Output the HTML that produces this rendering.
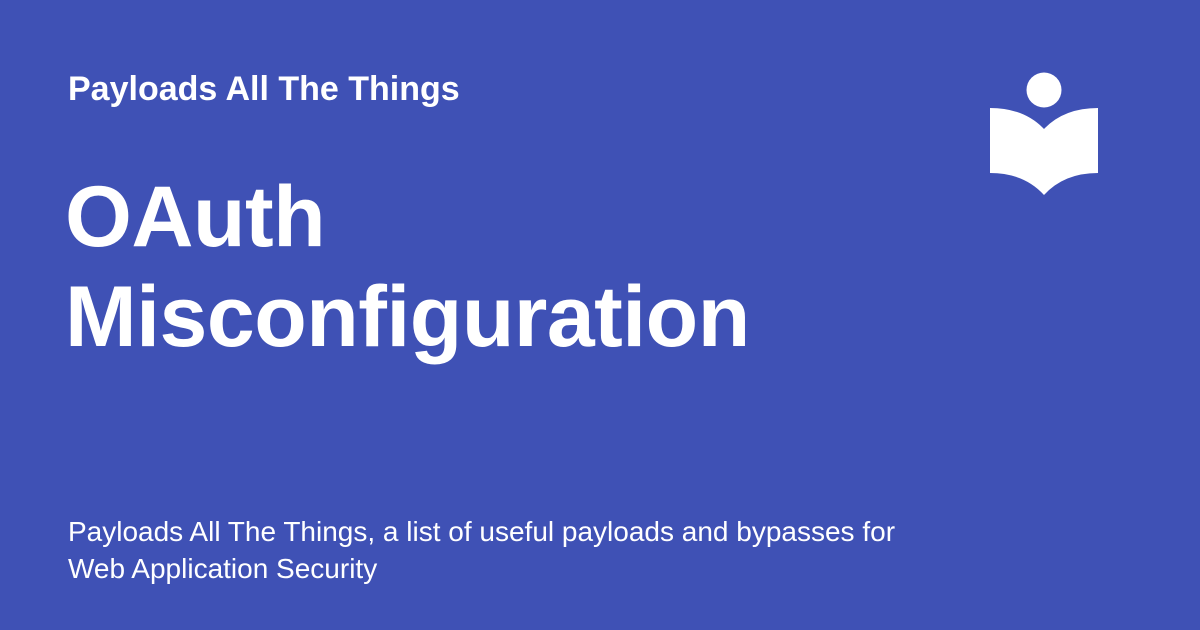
<!DOCTYPE html>
<html><head><style>
html,body{margin:0;padding:0}
body{width:1200px;height:630px;background:#3f51b5;position:relative;overflow:hidden;font-family:"Liberation Sans",Arial,sans-serif;color:#fff}
.h{position:absolute;left:68px;top:70px;font-size:34px;font-weight:bold;white-space:nowrap}
.t{position:absolute;left:65px;top:167px;font-size:86px;font-weight:bold;line-height:100px;white-space:nowrap;letter-spacing:-0.5px}
.d{position:absolute;left:68px;top:513px;font-size:28px;line-height:37px;white-space:nowrap}
svg{position:absolute;left:0;top:0}
</style></head><body>
<div class="h">Payloads All The Things</div>
<div class="t">OAuth<br>Misconfiguration</div>
<div class="d">Payloads All The Things, a list of useful payloads and bypasses for<br>Web Application Security</div>
<svg width="1200" height="630"><circle cx="1044" cy="90" r="17.5" fill="#fff"/>
<path d="M990 108 Q1024 108 1044 129 Q1064 108 1098 108 L1098 173 Q1064 173 1044 195 Q1024 173 990 173 Z" fill="#fff"/></svg>
</body></html>
